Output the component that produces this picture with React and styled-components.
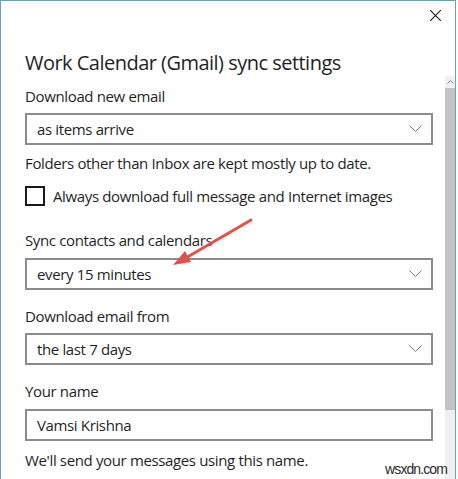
import React from "react";
import styled, { createGlobalStyle } from "styled-components";

const Global = createGlobalStyle`
  html, body { margin: 0; padding: 0; background: #fff; }
  body { font-family: "Open Sans", "Noto Sans", sans-serif; color: #1f1f1f; }
  * { box-sizing: border-box; }
`;

const Frame = styled.div`
  position: relative;
  width: 456px;
  height: 479px;
  border-left: 1px solid #6f9fb0;
  border-top: 1px solid #6f9fb0;
  border-right: 1px solid #6f9fb0;
  display: flex;
  overflow: hidden;
  background: #fff;
`;

const Content = styled.div`
  flex: 1;
  padding-left: 24px;
  display: flex;
  flex-direction: column;
`;

const Header = styled.div`
  height: 48px;
  display: flex;
  justify-content: flex-end;
  align-items: flex-start;
  padding-top: 9px;
`;

const Close = styled.svg`
  width: 11px;
  height: 11px;
  margin-right: 4px;
`;

const Title = styled.h1`
  margin: 0;
  font-size: 20px;
  font-weight: 400;
  line-height: 28px;
  letter-spacing: -0.52px;
`;

const Label = styled.div`
  font-size: 15px;
  line-height: 20px;
  margin-top: ${(p) => p.$mt}px;
  letter-spacing: -0.36px;
`;

const Field = styled.div`
  width: 408px;
  height: 32px;
  margin-top: ${(p) => p.$mt}px;
  border: 2px solid #8c8c8c;
  display: flex;
  align-items: center;
  justify-content: space-between;
  padding: 0 9px 0 10px;
  font-size: 15px;
  letter-spacing: -0.36px;
`;

const Chevron = styled.svg`
  width: 13px;
  height: 8px;
`;

const CheckRow = styled.div`
  display: flex;
  align-items: center;
  gap: 8px;
  margin-top: ${(p) => p.$mt}px;
  font-size: 15px;
  line-height: 20px;
  letter-spacing: -0.36px;
`;

const Box = styled.div`
  width: 20px;
  height: 20px;
  border: 2px solid #1a1a1a;
`;

const Scrollbar = styled.div`
  width: 10px;
  margin-top: 75px;
  display: flex;
  flex-direction: column;
  background: #f0f0f0;
`;

const UpArrow = styled.div`
  height: 12px;
  display: flex;
  align-items: center;
  justify-content: center;
`;

const Thumb = styled.div`
  height: 322px;
  background: #c2c2c2;
`;

const Annotation = styled.svg`
  position: absolute;
  left: 0;
  top: 0;
  pointer-events: none;
`;

const Watermark = styled.div`
  position: absolute;
  right: 8px;
  bottom: 2px;
  font-family: "Liberation Sans", Arial, sans-serif;
  font-size: 14px;
  letter-spacing: -0.9px;
  color: #2a2a2a;
`;

function Select({ value, mt }) {
  return (
    <Field $mt={mt}>
      <span>{value}</span>
      <Chevron viewBox="0 0 13 8">
        <polyline points="0.5,0.5 6.5,6.5 12.5,0.5" fill="none" stroke="#7a7a7a" strokeWidth="1" />
      </Chevron>
    </Field>
  );
}

export default function App() {
  return (
    <>
      <Global />
      <Frame>
        <Content>
          <Header>
            <Close viewBox="0 0 11 11">
              <path d="M0 0 L11 11 M11 0 L0 11" stroke="#222" strokeWidth="1.2" />
            </Close>
          </Header>
          <Title>Work Calendar (Gmail) sync settings</Title>
          <Label $mt={9}>Download new email</Label>
          <Select value="as items arrive" mt={7} />
          <Label $mt={8}>Folders other than Inbox are kept mostly up to date.</Label>
          <CheckRow $mt={13}>
            <Box />
            <span>Always download full message and Internet images</span>
          </CheckRow>
          <Label $mt={24}>Sync contacts and calendars</Label>
          <Select value="every 15 minutes" mt={8} />
          <Label $mt={16}>Download email from</Label>
          <Select value="the last 7 days" mt={7} />
          <Label $mt={16}>Your name</Label>
          <Field $mt={8}>
            <span>Vamsi Krishna</span>
          </Field>
          <Label $mt={9}>We'll send your messages using this name.</Label>
        </Content>
        <Scrollbar>
          <UpArrow>
            <svg width="7" height="4" viewBox="0 0 7 4">
              <polyline points="0.5,3.5 3.5,0.5 6.5,3.5" fill="none" stroke="#888" strokeWidth="1" />
            </svg>
          </UpArrow>
          <Thumb />
        </Scrollbar>
        <Annotation width="458" height="479" viewBox="0 0 458 479">
          <line x1="250" y1="219" x2="183" y2="258" stroke="#e0524a" strokeWidth="3" strokeLinecap="round" />
          <polygon points="172,264 184,250 190,261" fill="#e0524a" />
        </Annotation>
        <Watermark>wsxdn.com</Watermark>
      </Frame>
    </>
  );
}
